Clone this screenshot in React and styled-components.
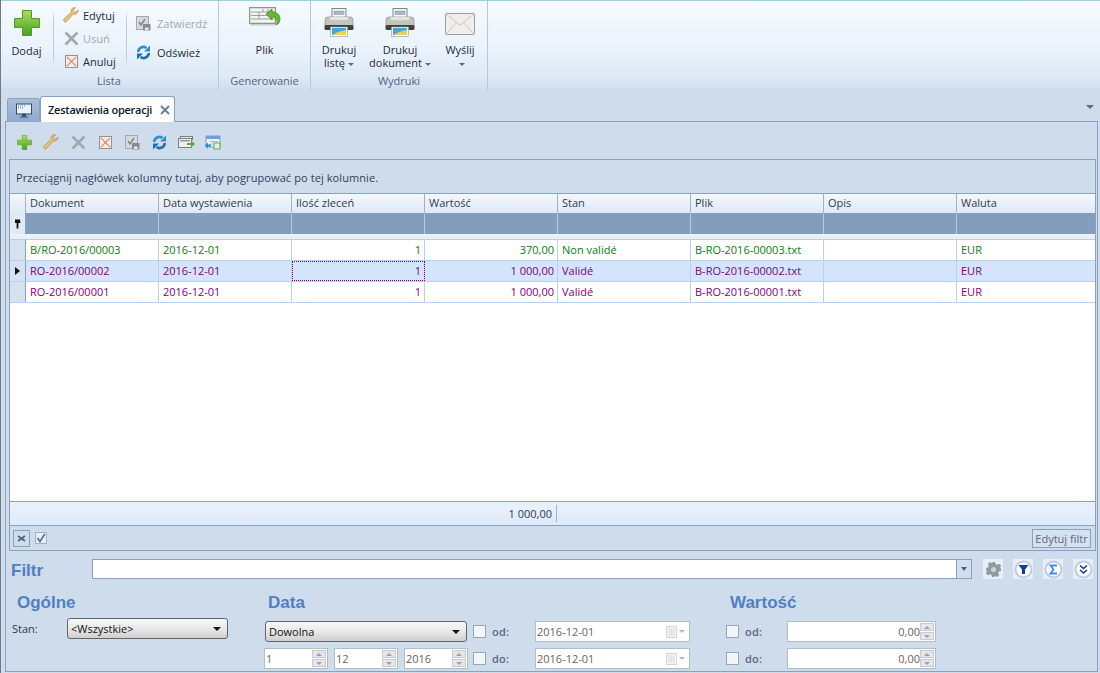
import React from "react";
import styled, { createGlobalStyle } from "styled-components";

const Global = createGlobalStyle`
  html, body { margin: 0; padding: 0; background: #cfdcec; }
  body { font-family: "Open Sans", "Liberation Sans", sans-serif; font-size: 11px; color: #1e2a3e; }
  * { box-sizing: border-box; }
`;

const Page = styled.div`
  width: 1100px; height: 673px; display: flex; flex-direction: column; overflow: hidden;
  background: #cfdcec; border-left: 1px solid #6f7a88;
`;
const Ribbon = styled.div`
  height: 90px; flex: none; display: flex; border-top: 1px solid #9fd0dc; margin-left: -1px;
  background: linear-gradient(#f6fafe 0%, #eaf2fb 55%, #dde9f6 85%, #cfdeee 100%);
`;
const RibbonGroup = styled.div`
  width: ${p => p.$w}px; flex: none; display: flex; flex-direction: column;
  border-right: 1px solid #b6c8dd;
`;
const GroupBody = styled.div`
  flex: 1; display: flex; min-height: 0; position: relative; padding-left: ${p => p.$pl || 0}px;
`;
const GroupLabel = styled.div`
  height: 17px; flex: none; text-align: center; color: #52657f; line-height: 15px; font-size: 11px;
`;
const BigButton = styled.div`
  width: ${p => p.$w}px; flex: none; display: flex; flex-direction: column; align-items: center;
  color: #1e2a3e; line-height: 13px; text-align: center; padding-top: ${p => p.$pt ?? 6}px;
`;
const BigLabel = styled.div` margin-top: ${p => p.$mt ?? 6}px; `;
const Caret = styled.span`
  display: inline-block; width: 0; height: 0; border: 3px solid transparent; border-top: 3px solid #5d6b7e;
  border-bottom: 0; vertical-align: middle; margin-left: 3px;
`;
const VSep = styled.div`
  width: 1px; flex: none; margin: 9px ${p => p.$mr || 0}px 0 ${p => p.$ml || 0}px; height: 58px;
  background: linear-gradient(#eaf2fb, #bccde0 20%, #bccde0 80%, #eaf2fb);
`;
const SmallCol = styled.div`
  display: flex; flex-direction: column; flex: none; width: ${p => p.$w}px; padding-top: ${p => p.$pt}px; gap: ${p => p.$gap}px;
`;
const SmallBtn = styled.div`
  display: flex; align-items: center; height: 18px; gap: ${p => p.$gap ?? 4}px;
  color: ${p => p.$off ? "#a0a8b4" : "#1e2a3e"};
`;
const SmallIcon = styled.span` width: 16px; flex: none; display: flex; align-items: center; justify-content: center; `;

const TabStrip = styled.div`
  height: 32px; flex: none; display: flex; align-items: flex-end; position: relative;
  border-bottom: 1px solid #8aa0bf; margin-right: 2px; margin-left: 4px; padding-left: 2px;
`;
const HomeTab = styled.div`
  width: 33px; height: 24px; display: flex; align-items: center; justify-content: center; margin-bottom: -1px;
  border: 1px solid #8aa0bf; border-bottom: 0; border-radius: 3px 3px 0 0; background: linear-gradient(#a9bfdd,#8fa9cf);
`;
const ActiveTab = styled.div`
  width: 135px; height: 26px; display: flex; align-items: center; padding-left: 7px; gap: 8px; margin-bottom: -1px;
  background: #fff; border: 1px solid #8aa0bf; border-bottom: 0; border-radius: 3px 3px 0 0;
  font-weight: 600; color: #10182a; font-size: 11px; letter-spacing: -.25px;
`;
const StripMenu = styled.div`
  position: absolute; right: 4px; top: 15px; width: 0; height: 0; border: 4px solid transparent; border-top: 4px solid #5d6f88; border-bottom: 0;
`;

const Main = styled.div`
  flex: 1; min-height: 0; margin: 0 2px 1px 4px; border: 1px solid #8aa0bf; border-top: 0; display: flex; flex-direction: column; background: #cfdcec;
`;
const Toolbar = styled.div`
  height: 37px; flex: none; display: flex; align-items: center; padding: 3px 0 0 9px; gap: 9px;
`;
const ToolSlot = styled.span` width: 18px; height: 18px; display: flex; align-items: center; justify-content: center; `;

const Grid = styled.div`
  flex: 1; min-height: 0; margin: 0 1px 0 3px; border: 1px solid #8aa0bf; display: flex; flex-direction: column;
`;
const GroupPanel = styled.div`
  height: 34px; flex: none; padding: 9px 0 0 6px; line-height: 17px; color: #2f3f58; letter-spacing: .09px; border-bottom: 1px solid #8aa0bf;
`;
const cols = "16px repeat(7, 133px) 1fr";
const HeaderRow = styled.div`
  display: grid; grid-template-columns: ${cols}; height: 19px; flex: none;
  background: linear-gradient(#f4f8fd, #dfe9f6);
`;
const HeaderCell = styled.div`
  border-right: 1px solid #9db3cf; padding-left: 4px; line-height: 18px; color: #2c3b55;
  &:last-child { border-right: 0; }
`;
const FilterRow = styled.div`
  display: grid; grid-template-columns: ${cols}; height: 22px; flex: none; background: #839dbc; border-bottom: 1px solid #f0f5fb;
`;
const FilterCell = styled.div`
  border-right: 1px solid #b8c9dd; &:last-child { border-right: 0; }
`;
const FilterKey = styled.div`
  background: #e1e9f4; border-right: 1px solid #8aa0bf; display: flex; align-items: center; justify-content: center;
`;
const Gap = styled.div`
  height: 5px; flex: none; background: #e9f0f8; border-bottom: 1px solid #b9cfe9;
`;
const Body = styled.div` flex: 1; min-height: 0; background: #fff; `;
const Row = styled.div`
  display: grid; grid-template-columns: ${cols}; height: 21px; border-bottom: 1px solid #b9d0ee;
  background: ${p => p.$sel ? "#d3e4fb" : "#fff"}; color: ${p => p.$c};
`;
const Indicator = styled.div`
  background: #d6e1f0; border-right: 1px solid #8aa0bf; display: flex; align-items: center; justify-content: center;
`;
const Cell = styled.div`
  border-right: 1px solid #b9d0ee; padding: 0 3px 0 4px; line-height: 20px; text-align: ${p => p.$r ? "right" : "left"};
  &:last-child { border-right: 0; }
  ${p => p.$focus && "outline: 1px dotted #800080; outline-offset: -1px;"}
`;
const FooterRow = styled.div`
  height: 25px; flex: none; display: flex; background: linear-gradient(#e9f1fb, #dfeaf8); border-top: 1px solid #8aa0bf; border-bottom: 1px solid #8aa0bf;
`;
const FooterSum = styled.div`
  width: 547px; margin-top: 3px; height: 17px; border-right: 1px solid #9db3cf; text-align: right; padding-right: 4px; line-height: 17px; color: #2c3b55;
`;
const GridBar = styled.div`
  height: 24px; flex: none; display: flex; align-items: center; padding: 0 3px; gap: 5px;
`;
const CloseBtn = styled.div`
  width: 17px; height: 17px; border: 1px solid #8aa0bf; display: flex; align-items: center; justify-content: center;
`;
const MiniCheck = styled.div`
  width: 12px; height: 12px; border: 1px solid #9fb3cd; background: #e8eef7; display: flex; align-items: center; justify-content: center;
`;
const EditFilter = styled.div`
  margin-left: auto; width: 59px; height: 19px; border: 1px solid #8aa0bf; margin-right: 1px; text-align: center; line-height: 17px; color: #5c6782; white-space: nowrap;
  background: #d5e1ef;
`;

const FilterBar = styled.div`
  flex: none; height: 120px; padding: 0 0 0 5px; display: flex; flex-direction: column;
`;
const FilterTop = styled.div`
  height: 41px; flex: none; display: flex; align-items: flex-start; padding-top: 8px;
`;
const FilterTitle = styled.div`
  width: 81px; flex: none; font: bold 17px/24px "Liberation Sans", sans-serif; color: #4f80c0;
`;
const FilterInputBox = styled.div`
  width: 880px; height: 20px; flex: none; background: #fff; border: 1px solid #8aa0bf; display: flex; justify-content: flex-end;
`;
const FilterDrop = styled.div`
  width: 15px; background: #d3dfee; border-left: 1px solid #8aa0bf; display: flex; align-items: center; justify-content: center;
`;
const DropArrow = styled.span`
  width: 0; height: 0; border: 3px solid transparent; border-top: 4px solid #4f5f75; border-bottom: 0;
`;
const RoundBtn = styled.div`
  width: 20px; height: 20px; flex: none; margin-left: ${p => p.$ml}px; background: #e6eef8; display: flex; align-items: center; justify-content: center;
`;
const FormArea = styled.div` display: flex; flex: 1; min-height: 0; `;
const FormSection = styled.div`
  width: ${p => p.$w}px; flex: none; padding-left: ${p => p.$pl}px; display: flex; flex-direction: column;
`;
const SectionTitle = styled.div`
  height: 24px; flex: none; padding-left: ${p => p.$pl || 0}px; font: bold 17px/22px "Liberation Sans", sans-serif; color: #4f80c0;
`;
const FormRow = styled.div`
  display: flex; align-items: center; margin-top: ${p => p.$mt || 0}px; margin-left: ${p => p.$ml || 0}px; height: 21px; flex: none;
`;
const FieldLabel = styled.div`
  width: ${p => p.$w}px; flex: none; color: ${p => p.$c || "#2c3b55"}; font-weight: ${p => p.$b ? 600 : 400};
  letter-spacing: ${p => p.$b ? ".2px" : 0};
`;
const ComboBox = styled.div`
  width: ${p => p.$w}px; height: 21px; flex: none; border: 1px solid #5f6672; border-radius: 3px; padding: 0 6px 0 3px; margin-right: ${p => p.$mr || 0}px;
  background: linear-gradient(#f8f8f8, #e8e8e8 50%, #cfcfcf); display: flex; align-items: center; justify-content: space-between; color: #111;
`;
const ComboArrow = styled.span`
  width: 0; height: 0; border: 4px solid transparent; border-top: 4px solid #111; border-bottom: 0;
`;
const CheckBox = styled.div`
  width: 13px; height: 13px; flex: none; border: 1px solid #9aa5b3; background: #f2f5fa; margin: 0 ${p => p.$mr}px 0 ${p => p.$ml || 0}px;
`;
const Field = styled.div`
  width: ${p => p.$w}px; height: 21px; flex: none; background: #fff; border: 1px solid #b4bcc6; display: flex; align-items: center; justify-content: space-between;
  color: #6d5f5a; padding-left: 1px; margin-right: ${p => p.$mr || 0}px;
  text-align: ${p => p.$r ? "right" : "left"};
`;
const FieldText = styled.span` flex: 1; `;
const Spin = styled.div`
  width: 15px; flex: none; height: 100%; display: flex; flex-direction: column; gap: 1px; padding: 1px 1px 1px 0;
`;
const SpinPart = styled.div`
  flex: 1; background: #e4e6ea; border: 1px solid #c8ccd2; display: flex; align-items: center; justify-content: center;
`;
const TriUp = styled.span` width:0;height:0;border:3px solid transparent;border-bottom:3px solid #9aa2ad;border-top:0; `;
const TriDown = styled.span` width:0;height:0;border:3px solid transparent;border-top:3px solid #9aa2ad;border-bottom:0; `;
const DateTail = styled.div` display: flex; align-items: center; gap: 2px; padding-right: 4px; opacity: .75; `;

const Plus = ({ s = 18, arm = 9 }) => {
  const a = (26 - arm) / 2;
  const b = a + arm;
  return (
    <svg width={s} height={s} viewBox="0 0 26 26">
      <defs><linearGradient id="gp" x1="0" y1="0" x2="0" y2="1"><stop offset="0" stopColor="#a8de5c"/><stop offset="1" stopColor="#46a31e"/></linearGradient></defs>
      <path d={`M${a} .5h${arm}V${a}H25.500V${b}H${b}V25.500H${a}V${b}H.5V${a}H${a}z`} fill="url(#gp)" stroke="#4c9c2a" strokeWidth="1"/>
    </svg>
  );
};
const Wrench = ({ s = 16 }) => (
  <svg width={s} height={s} viewBox="0 0 16 16"><path d="M15 3.200l-2.600 2.200-1.800-.6-.5-1.900L12.600.8C10.500.2 8.300 1.400 8.100 3.600c0 .7.1 1.200.3 1.700L1.200 11.800c-.8.800-.8 1.900-.1 2.600.8.800 1.800.700 2.600-.1l6.500-7.200c2.800.8 5.300-1.500 4.800-3.900z" fill="#ebc274" stroke="#b08a45" strokeWidth=".7"/></svg>
);
const XIcon = ({ s = 15 }) => (
  <svg width={s} height={s} viewBox="0 0 15 15"><path d="M1.500 1.500l12 12M13.500 1.500l-12 12" stroke="#a2a8b0" strokeWidth="2.600"/></svg>
);
const Cancel = ({ s = 13 }) => (
  <svg width={s} height={s} viewBox="0 0 14 14"><rect x=".5" y=".5" width="13" height="13" fill="#f1ede9" stroke="#8d8d8d"/><path d="M2 2l10 10M12 2L2 12" stroke="#ea7a70" strokeWidth="1.200"/></svg>
);
const Approve = ({ s = 15 }) => (
  <svg width={s} height={s} viewBox="0 0 15 15"><rect x=".5" y=".5" width="12" height="13" fill="#d6d9dd" stroke="#a5a9ae"/><path d="M3 6l2 3 4-6" stroke="#7f858c" strokeWidth="1.400" fill="none"/><rect x="7" y="8" width="7.500" height="6.500" fill="#868b92"/><rect x="9" y="11.500" width="3.500" height="2.500" fill="#e6e8ea"/></svg>
);
const Refresh = ({ s = 15 }) => (
  <svg width={s} height={s} viewBox="0 0 15 15"><path d="M2.200 7A5.200 5.200 0 0 1 10.500 3" fill="none" stroke="#2f8fd0" strokeWidth="2.600"/><path d="M14 .5v6H8z" fill="#2f8fd0"/><path d="M12.800 8A5.200 5.200 0 0 1 4.500 12" fill="none" stroke="#1f6fb4" strokeWidth="2.600"/><path d="M1 14.500v-6h6z" fill="#1f6fb4"/></svg>
);
const Sheet = () => (
  <svg width="32" height="19" viewBox="0 0 32 19">
    <rect x=".5" y=".5" width="26" height="16" fill="#d8dbd8" stroke="#8f9490"/>
    <rect x="2" y="2" width="23" height="13" fill="#f4f5f3"/>
    <path d="M2 5h23M2 8.500h23M2 12h23M10 5v7M19 2v3M14 2v3" stroke="#9aa09d" strokeWidth="1"/>
    <rect x="1" y="17" width="26" height="1.500" fill="#c9cdca"/>
    <path d="M17 7l6-5v3c5 0 8 3 8 7 0 2-1 5-4 6 1-2 1-3 1-4 0-2-2-4-5-4v3z" fill="#68b832" stroke="#3d7f1d" strokeWidth=".7"/>
  </svg>
);
const Printer = () => (
  <svg width="30" height="29" viewBox="0 0 30 29">
    <rect x="8" y=".5" width="14" height="10" fill="#f7f8f8" stroke="#7f8483"/>
    <rect x="10" y="3" width="10" height="3.500" fill="#a5b9d4" stroke="#7d8e9f" strokeWidth=".5"/>
    <path d="M1 12q0-3 3-3h22q3 0 3 3v6H1z" fill="#c3c6bd" stroke="#8f928a" strokeWidth=".7"/>
    <rect x="6" y="9" width="18" height="3" fill="#e3e4de"/>
    <rect x=".5" y="17" width="29" height="5" rx="1.500" fill="#3f4144"/>
    <rect x="6.500" y="19" width="17" height="9.500" fill="#fdfdf8" stroke="#8c98a2" strokeWidth=".6"/>
    <rect x="8" y="20" width="14" height="7" fill="#47a4dc"/>
    <path d="M8 27l6-3 8-2v5z" fill="#ecd450"/>
  </svg>
);
const Mail = () => (
  <svg width="30" height="22" viewBox="0 0 30 22"><rect x=".5" y=".5" width="29" height="21" rx="1" fill="#f0efed" stroke="#9d9d9a"/><path d="M1 1l14 11L29 1M1 21l10-11M29 21L19 10" fill="none" stroke="#c6c5c2" strokeWidth="1"/></svg>
);
const Monitor = () => (
  <svg width="16" height="16" viewBox="0 0 16 16"><rect x=".5" y="1" width="15" height="10" fill="#eef3fa" stroke="#2f4a73"/><path d="M2 3h7M2 5h5" stroke="#5b7fb0" strokeWidth="1.200" strokeDasharray="1 1"/><path d="M6.500 11h3v2h-3zM4 14h8" fill="#2f4a73" stroke="#2f4a73"/></svg>
);
const TabClose = () => (
  <svg width="10" height="10" viewBox="0 0 10 10"><path d="M1 1l8 8M9 1l-8 8" stroke="#6f7f95" strokeWidth="2"/></svg>
);
const ExportA = () => (
  <svg width="17" height="13" viewBox="0 0 17 13"><rect x="2.500" y=".5" width="12" height="3" fill="#e8eaea" stroke="#7b807c"/><rect x=".5" y="2.500" width="13" height="9" fill="#eef0ee" stroke="#7b807c"/><rect x="2" y="4" width="10" height="1.500" fill="#8f9694"/><path d="M9 7h4V4.500L17 8l-4 3.500V9H9z" fill="#5fa830"/></svg>
);
const ExportB = () => (
  <svg width="16" height="15" viewBox="0 0 16 15"><rect x="1" y="1" width="14" height="11" fill="#eef3f7" stroke="#4f86b8" strokeWidth=".7"/><rect x="1" y="1" width="14" height="3" fill="#6aa2d4"/><path d="M5 6.500h8M5 9h8" stroke="#a3b5c4"/><path d="M0 10.500l3-3v2h3v2H3v2z" fill="#2a86c8"/><rect x="9" y="8" width="6" height="6" fill="#e2f0da" stroke="#4c9a3a" strokeWidth=".8"/></svg>
);
const Key = () => (
  <svg width="7" height="10" viewBox="0 0 7 10"><path d="M1 .5h5l.5 3.500H1z" fill="#111"/><rect x="2.600" y="3.500" width="1.800" height="6" fill="#111"/></svg>
);
const RowMark = () => (
  <svg width="5" height="8" viewBox="0 0 5 8"><path d="M0 0l5 4-5 4z" fill="#111"/></svg>
);
const SmallX = () => (
  <svg width="9" height="7" viewBox="0 0 9 7"><path d="M1 1l7 5M8 1L1 6" stroke="#4f5f75" strokeWidth="1.600"/></svg>
);
const Tick = () => (
  <svg width="10" height="10" viewBox="0 0 10 10"><path d="M1.500 5l2.500 3.500L8.800 1" fill="none" stroke="#5a6f92" strokeWidth="1.700"/></svg>
);
const Gear = () => (
  <svg width="17" height="17" viewBox="0 0 17 17"><path d="M7 1h3l.5 2 1.800.8 1.800-1 2 2-1 1.800L15.800 7 16 10l-2 .5-.8 1.800 1 1.800-2 2-1.800-1-1.800.8L8 16H7l-.5-2-1.800-.8-1.800 1-2-2 1-1.800L1.200 8.500 1 7l2-.5.800-1.800-1-1.800 2-2 1.800 1 1.200-.5z" fill="#8f9a9c"/><circle cx="8.500" cy="8.500" r="2.600" fill="#c9d0d3"/></svg>
);
const Ring = ({ children }) => (
  <svg width="19" height="19" viewBox="0 0 19 19"><circle cx="9.500" cy="9.500" r="8" fill="#fff" stroke="#c1c9e2" strokeWidth="2"/>{children}</svg>
);
const Calendar = () => (
  <svg width="11" height="12" viewBox="0 0 11 12"><rect x=".5" y=".5" width="10" height="11" fill="#f0f1f3" stroke="#c5c9ce"/><path d="M2 3h7M2 5h7M2 7h7M2 9h7M3.500 2v8M5.500 2v8M7.500 2v8" stroke="#d2d5da" strokeWidth=".8"/></svg>
);

const columns = ["Dokument","Data wystawienia","Ilość zleceń","Wartość","Stan","Plik","Opis","Waluta"];
const rows = [
  { c: "#0b7d0b", v: ["B/RO-2016/00003","2016-12-01","1","370,00","Non validé","B-RO-2016-00003.txt","","EUR"] },
  { c: "#800080", sel: true, v: ["RO-2016/00002","2016-12-01","1","1 000,00","Validé","B-RO-2016-00002.txt","","EUR"] },
  { c: "#800080", v: ["RO-2016/00001","2016-12-01","1","1 000,00","Validé","B-RO-2016-00001.txt","","EUR"] },
];

const Spinner = () => (
  <Spin><SpinPart><TriUp /></SpinPart><SpinPart><TriDown /></SpinPart></Spin>
);
const DateField = ({ v }) => (
  <Field $w={155}><FieldText>{v}</FieldText><DateTail><Calendar /><TriDown /></DateTail></Field>
);

export default function App() {
  return (
    <Page>
      <Global />
      <Ribbon>
        <RibbonGroup $w={219}>
          <GroupBody>
            <BigButton $w={53} $pt={9}><Plus s={26} /><BigLabel $mt={8}>Dodaj</BigLabel></BigButton>
            <VSep $mr={9} />
            <SmallCol $w={63} $pt={5} $gap={5}>
              <SmallBtn><SmallIcon><Wrench /></SmallIcon><span>Edytuj</span></SmallBtn>
              <SmallBtn $off><SmallIcon><XIcon /></SmallIcon><span>Usuń</span></SmallBtn>
              <SmallBtn><SmallIcon><Cancel /></SmallIcon><span>Anuluj</span></SmallBtn>
            </SmallCol>
            <VSep $mr={9} />
            <SmallCol $w={80} $pt={13} $gap={11}>
              <SmallBtn $off $gap={6}><Approve /><span>Zatwierdź</span></SmallBtn>
              <SmallBtn $gap={6}><Refresh /><span>Odśwież</span></SmallBtn>
            </SmallCol>
          </GroupBody>
          <GroupLabel>Lista</GroupLabel>
        </RibbonGroup>
        <RibbonGroup $w={92}>
          <GroupBody>
            <BigButton $w={91} $pt={6}><Sheet /><BigLabel $mt={17}>Plik</BigLabel></BigButton>
          </GroupBody>
          <GroupLabel>Generowanie</GroupLabel>
        </RibbonGroup>
        <RibbonGroup $w={177}>
          <GroupBody $pl={3}>
            <BigButton $w={50} $pt={7}><Printer /><BigLabel $mt={6}>Drukuj<br/>listę<Caret /></BigLabel></BigButton>
            <BigButton $w={72} $pt={7}><Printer /><BigLabel $mt={6}>Drukuj<br/>dokument<Caret /></BigLabel></BigButton>
            <BigButton $w={48} $pt={12}><Mail /><BigLabel $mt={8}>Wyślij<br/><Caret /></BigLabel></BigButton>
          </GroupBody>
          <GroupLabel>Wydruki</GroupLabel>
        </RibbonGroup>
      </Ribbon>
      <TabStrip>
        <HomeTab><Monitor /></HomeTab>
        <ActiveTab>Zestawienia operacji<TabClose /></ActiveTab>
        <StripMenu />
      </TabStrip>
      <Main>
        <Toolbar>
          <ToolSlot><Plus s={15} arm={8} /></ToolSlot>
          <ToolSlot><Wrench /></ToolSlot>
          <ToolSlot><XIcon /></ToolSlot>
          <ToolSlot><Cancel /></ToolSlot>
          <ToolSlot><Approve /></ToolSlot>
          <ToolSlot><Refresh /></ToolSlot>
          <ToolSlot><ExportA /></ToolSlot>
          <ToolSlot><ExportB /></ToolSlot>
        </Toolbar>
        <Grid>
          <GroupPanel>Przeciągnij nagłówek kolumny tutaj, aby pogrupować po tej kolumnie.</GroupPanel>
          <HeaderRow>
            <HeaderCell />
            {columns.map(c => <HeaderCell key={c}>{c}</HeaderCell>)}
          </HeaderRow>
          <FilterRow>
            <FilterKey><Key /></FilterKey>
            {columns.map(c => <FilterCell key={c} />)}
          </FilterRow>
          <Gap />
          <Body>
            {rows.map((r, i) => (
              <Row key={i} $c={r.c} $sel={r.sel}>
                <Indicator>{r.sel && <RowMark />}</Indicator>
                {r.v.map((t, j) => (
                  <Cell key={j} $r={j === 2 || j === 3} $focus={r.sel && j === 2}>{t}</Cell>
                ))}
              </Row>
            ))}
          </Body>
          <FooterRow><FooterSum>1 000,00</FooterSum></FooterRow>
          <GridBar>
            <CloseBtn><SmallX /></CloseBtn>
            <MiniCheck><Tick /></MiniCheck>
            <EditFilter>Edytuj filtr</EditFilter>
          </GridBar>
        </Grid>
        <FilterBar>
          <FilterTop>
            <FilterTitle>Filtr</FilterTitle>
            <FilterInputBox><FilterDrop><DropArrow /></FilterDrop></FilterInputBox>
            <RoundBtn $ml={11}><Gear /></RoundBtn>
            <RoundBtn $ml={10}><Ring><path d="M4.500 5h10L11 9.500V14H8V9.500z" fill="#0b3f9f"/></Ring></RoundBtn>
            <RoundBtn $ml={10}><Ring><path d="M13 5.500H6.500L9.500 9.500l-3 4H13" fill="none" stroke="#3a8cf0" strokeWidth="1.800"/></Ring></RoundBtn>
            <RoundBtn $ml={10}><Ring><path d="M6 5.500l3.500 3 3.500-3M6 10l3.500 3 3.500-3" fill="none" stroke="#0b3f9f" strokeWidth="1.600"/></Ring></RoundBtn>
          </FilterTop>
          <FormArea>
            <FormSection $w={254} $pl={1}>
              <SectionTitle $pl={5}>Ogólne</SectionTitle>
              <FormRow $mt={2}>
                <FieldLabel $w={55}>Stan:</FieldLabel>
                <ComboBox $w={161}>&lt;Wszystkie&gt;<ComboArrow /></ComboBox>
              </FormRow>
            </FormSection>
            <FormSection $w={461} $pl={0}>
              <SectionTitle $pl={3}>Data</SectionTitle>
              <FormRow $mt={5}>
                <ComboBox $w={202} $mr={6}>Dowolna<ComboArrow /></ComboBox>
                <CheckBox $mr={6} />
                <FieldLabel $w={43} $b $c="#5c6782">od:</FieldLabel>
                <DateField v="2016-12-01" />
              </FormRow>
              <FormRow $mt={6} $ml={-1}>
                <Field $w={64} $mr={6}><FieldText>1</FieldText><Spinner /></Field>
                <Field $w={64} $mr={6}><FieldText>12</FieldText><Spinner /></Field>
                <Field $w={64} $mr={5}><FieldText>2016</FieldText><Spinner /></Field>
                <CheckBox $mr={6} />
                <FieldLabel $w={43} $b $c="#5c6782">do:</FieldLabel>
                <DateField v="2016-12-01" />
              </FormRow>
            </FormSection>
            <FormSection $w={230} $pl={0}>
              <SectionTitle $pl={4}>Wartość</SectionTitle>
              <FormRow $mt={5}>
                <CheckBox $mr={6} />
                <FieldLabel $w={42} $b $c="#5c6782">od:</FieldLabel>
                <Field $w={149} $r><FieldText>0,00</FieldText><Spinner /></Field>
              </FormRow>
              <FormRow $mt={6}>
                <CheckBox $mr={6} />
                <FieldLabel $w={42} $b $c="#5c6782">do:</FieldLabel>
                <Field $w={149} $r><FieldText>0,00</FieldText><Spinner /></Field>
              </FormRow>
            </FormSection>
          </FormArea>
        </FilterBar>
      </Main>
    </Page>
  );
}
